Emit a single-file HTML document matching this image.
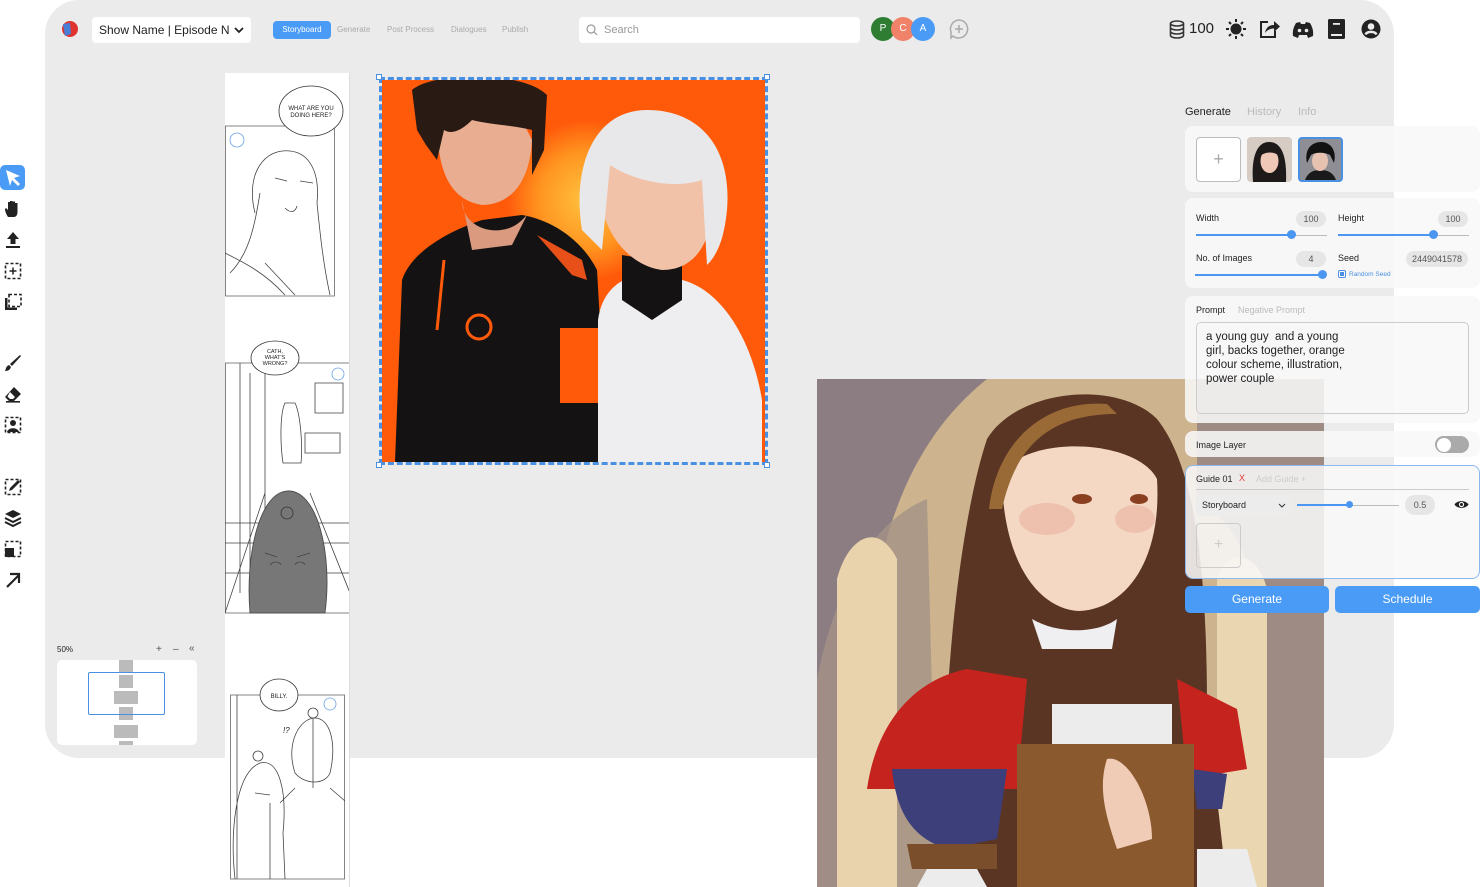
<!DOCTYPE html>
<html><head><meta charset="utf-8">
<style>
*{margin:0;padding:0;box-sizing:border-box}
body{width:1481px;height:887px;overflow:hidden;background:#fff;font-family:"Liberation Sans",sans-serif;position:relative;color:#222}
.abs{position:absolute}
.app{left:45px;top:0;width:1349px;height:758px;background:#ebebeb;border-radius:34px}
.card{position:absolute;left:1185px;width:295px;background:rgba(248,248,248,0.88);border-radius:8px}
.pill{position:absolute;background:#e6e6e6;border-radius:10px;font-size:9px;color:#555;text-align:center;line-height:16px}
.lbl{position:absolute;font-size:9px;color:#222}
.track{position:absolute;height:1px;background:#bbb}
.fill{position:absolute;height:2px;background:#4a96f0}
.knob{position:absolute;width:9px;height:9px;border-radius:50%;background:#4a96f0}
.btn{position:absolute;top:586px;height:27px;background:#4a9bf5;border-radius:5px;color:#fff;font-size:12px;text-align:center;line-height:27px}
.tool{position:absolute;left:3px;width:20px;height:20px}
</style></head><body>
<div class="abs app"></div>

<div class="abs" style="left:60px;top:20px;width:18px;height:18px">
<svg width="18" height="18" viewBox="0 0 18 18"><circle cx="10" cy="9" r="8" fill="#e0332f"/><path d="M3 4 L10 3 L11 14 L5 16 Z" fill="#4a7fd8"/></svg></div>
<div class="abs" style="left:92px;top:17px;width:159px;height:26px;background:#fff;border-radius:4px;font-size:12px;line-height:26px;padding-left:7px;color:#222">Show Name | Episode N <span style="position:absolute;right:7px;top:0">
<svg width="10" height="8" viewBox="0 0 10 8"><path d="M1 2 L5 6 L9 2" stroke="#222" stroke-width="1.8" fill="none"/></svg></span></div>
<div class="abs" style="left:273px;top:21px;width:58px;height:18px;background:#4a9bf5;border-radius:4px;color:#fff;font-size:8px;line-height:18px;text-align:center">Storyboard</div>
<div class="abs" style="left:337px;top:21px;font-size:8px;line-height:18px;color:#aaa">Generate</div>
<div class="abs" style="left:387px;top:21px;font-size:8px;line-height:18px;color:#aaa">Post Process</div>
<div class="abs" style="left:451px;top:21px;font-size:8px;line-height:18px;color:#aaa">Dialogues</div>
<div class="abs" style="left:502px;top:21px;font-size:8px;line-height:18px;color:#aaa">Publish</div>
<div class="abs" style="left:579px;top:17px;width:281px;height:26px;background:#fff;border-radius:4px;font-size:11px;line-height:26px;padding-left:25px;color:#999">Search
<svg class="abs" style="left:7px;top:7px" width="12" height="12" viewBox="0 0 12 12"><circle cx="5" cy="5" r="4" stroke="#999" fill="none" stroke-width="1.2"/><path d="M8 8 L11 11" stroke="#999" stroke-width="1.2"/></svg></div>
<div class="abs" style="left:871px;top:17px;width:24px;height:24px;border-radius:50%;background:#2e7d32;color:#fff;font-size:10px;text-align:center;line-height:24px">P</div>
<div class="abs" style="left:891px;top:17px;width:24px;height:24px;border-radius:50%;background:#f0826a;color:#fff;font-size:10px;text-align:center;line-height:24px">C</div>
<div class="abs" style="left:911px;top:17px;width:24px;height:24px;border-radius:50%;background:#4a9bf5;color:#fff;font-size:10px;text-align:center;line-height:24px">A</div>
<svg class="abs" style="left:948px;top:18px" width="22" height="22" viewBox="0 0 22 22"><path d="M11 2 A9 9 0 1 1 5 18 L3 20 L3 14 A9 9 0 0 1 11 2Z" stroke="#aaa" stroke-width="1.5" fill="none"/><path d="M11 7 V15 M7 11 H15" stroke="#aaa" stroke-width="1.5"/></svg>
<svg class="abs" style="left:1169px;top:20px" width="16" height="19" viewBox="0 0 16 19"><g fill="none" stroke="#333" stroke-width="1.6"><ellipse cx="8" cy="3.5" rx="6.5" ry="2.5"/><path d="M1.5 3.5V15.5c0 1.4 3 2.5 6.5 2.5s6.5-1.1 6.5-2.5V3.5M1.5 7.5c0 1.4 3 2.5 6.5 2.5s6.5-1.1 6.5-2.5M1.5 11.5c0 1.4 3 2.5 6.5 2.5s6.5-1.1 6.5-2.5"/></g></svg>
<div class="abs" style="left:1189px;top:20px;font-size:15px;color:#222">100</div>
<svg class="abs" style="left:1225px;top:18px" width="22" height="22" viewBox="0 0 22 22"><circle cx="11" cy="11" r="5.5" fill="#222"/><g stroke="#222" stroke-width="2"><path d="M11 1v3M11 18v3M1 11h3M18 11h3M4 4l2 2M16 16l2 2M4 18l2-2M16 6l2-2"/></g></svg>
<svg class="abs" style="left:1259px;top:19px" width="22" height="20" viewBox="0 0 22 20"><path d="M9 3H2V18H16V12" stroke="#222" stroke-width="2" fill="none"/><path d="M6 14 C7 8 11 6 15 6 V2 L21 7.5 L15 13 V9.5 C11 9.5 8 11 6 14Z" fill="#222"/></svg>
<svg class="abs" style="left:1292px;top:21px" width="22" height="17" viewBox="0 0 22 17"><path d="M4 2 L8 1 L9 3 H13 L14 1 L18 2 C21 7 21.5 11 21 15 L16 17 L15 14 H7 L6 17 L1 15 C0.5 11 1 7 4 2Z" fill="#222"/><circle cx="7.5" cy="9.5" r="1.8" fill="#ebebeb"/><circle cx="14.5" cy="9.5" r="1.8" fill="#ebebeb"/></svg>
<svg class="abs" style="left:1328px;top:19px" width="17" height="20" viewBox="0 0 17 20"><rect x="0" y="0" width="17" height="20" rx="1.5" fill="#222"/><rect x="3" y="15" width="11" height="2" fill="#ebebeb"/><rect x="5" y="4" width="7" height="1.8" fill="#ebebeb"/></svg>
<svg class="abs" style="left:1361px;top:19px" width="20" height="20" viewBox="0 0 20 20"><circle cx="10" cy="10" r="9.5" fill="#222"/><circle cx="10" cy="7.5" r="3.3" fill="#ebebeb"/><path d="M4.5 15.5 C6 12 14 12 15.5 15.5" stroke="#ebebeb" stroke-width="2.4" fill="none"/></svg>

<div class="abs" style="left:0;top:165px;width:25px;height:25px;background:#4a9bf5;border-radius:5px"></div>
<svg class="tool" style="top:168px" viewBox="0 0 20 20"><path d="M3 2 L17 8 L11 10 L17 16 L15 18 L9 12 L7 18 Z" fill="#fff"/></svg>
<svg class="tool" style="top:199px" viewBox="0 0 20 20"><path d="M5 18 C3 15 2 12 2 10 L3 9 L5 11 V3 H7 V9 V2 H9.5 V9 V2.5 H12 V9 V4 H14.5 V13 C14.5 16 13 18 11 18Z" fill="#222"/></svg>
<svg class="tool" style="top:230px" viewBox="0 0 20 20"><path d="M10 2 L16 9 H12.5 V14 H7.5 V9 H4Z" fill="#222"/><rect x="3" y="16" width="14" height="2" fill="#222"/></svg>
<svg class="tool" style="top:261px" viewBox="0 0 20 20"><rect x="2.5" y="2.5" width="15" height="15" stroke="#222" stroke-width="1.6" stroke-dasharray="3 2" fill="none"/><path d="M10 6.5V13.5M6.5 10H13.5" stroke="#222" stroke-width="1.5"/></svg>
<svg class="tool" style="top:292px" viewBox="0 0 20 20"><rect x="6" y="2.5" width="12" height="12" stroke="#222" stroke-width="1.6" stroke-dasharray="3 2" fill="none"/><path d="M2 6 V18 H14 V15.5 H5 C4.5 15.5 4.5 15 4.5 14.5 V6Z" fill="#222"/></svg>
<svg class="tool" style="top:353px" viewBox="0 0 20 20"><path d="M17 2 L18 3 L9 13 L7 11Z" fill="#222"/><path d="M6 12 L8 14 C7 17 5 18 2 18 C3 16 3 13 6 12Z" fill="#222"/></svg>
<svg class="tool" style="top:384px" viewBox="0 0 20 20"><path d="M11 3 L18 10 L11 17 H6 L2 13Z" fill="#222"/><path d="M7 8 L12 13 L10 15 H7 L4.5 12.5Z" fill="#fff"/><rect x="3" y="17" width="14" height="1.6" fill="#222"/></svg>
<svg class="tool" style="top:415px" viewBox="0 0 20 20"><rect x="2.5" y="2.5" width="15" height="15" stroke="#222" stroke-width="1.6" stroke-dasharray="3 2" fill="none"/><circle cx="10" cy="8" r="3" fill="#222"/><path d="M4 17 C5 12 15 12 16 17Z" fill="#222"/></svg>
<svg class="tool" style="top:477px" viewBox="0 0 20 20"><rect x="2.5" y="2.5" width="15" height="15" stroke="#222" stroke-width="1.6" stroke-dasharray="3 2" fill="none"/><path d="M15 3 L17 5 L9 13 L6 14 L7 11Z" fill="#222"/></svg>
<svg class="tool" style="top:508px" viewBox="0 0 20 20"><path d="M10 2 L18 6 L10 10 L2 6Z" fill="#222"/><path d="M2 10 L10 14 L18 10 M2 14 L10 18 L18 14" stroke="#222" stroke-width="2" fill="none"/></svg>
<svg class="tool" style="top:539px" viewBox="0 0 20 20"><rect x="2.5" y="2.5" width="15" height="15" stroke="#222" stroke-width="1.6" stroke-dasharray="3 2" fill="none"/><rect x="2" y="9" width="9" height="9" fill="#222"/></svg>
<svg class="tool" style="top:570px" viewBox="0 0 20 20"><path d="M4 17 L16 5 M7 4 H16 V13" stroke="#222" stroke-width="2.2" fill="none"/></svg>

<div class="abs" style="left:57px;top:645px;font-size:8px;color:#222">50%</div>
<div class="abs" style="left:156px;top:644px;font-size:10px;color:#555">+</div>
<div class="abs" style="left:173px;top:644px;font-size:10px;color:#555">–</div>
<div class="abs" style="left:189px;top:643px;font-size:10px;color:#555">«</div>
<div class="abs" style="left:57px;top:660px;width:140px;height:85px;background:#fff;border-radius:5px;overflow:hidden">
<div class="abs" style="left:62px;top:0;width:14px;height:12px;background:#bbb"></div>
<div class="abs" style="left:62px;top:15px;width:14px;height:13px;background:#bbb"></div>
<div class="abs" style="left:57px;top:31px;width:24px;height:13px;background:#bbb"></div>
<div class="abs" style="left:62px;top:47px;width:14px;height:13px;background:#bbb"></div>
<div class="abs" style="left:57px;top:65px;width:24px;height:13px;background:#bbb"></div>
<div class="abs" style="left:62px;top:81px;width:14px;height:6px;background:#bbb"></div>
<div class="abs" style="left:31px;top:12px;width:77px;height:43px;border:1.5px solid #4a90e2;border-radius:2px"></div>
</div>

<div class="abs" style="left:225px;top:73px;width:125px;height:814px;background:#fff;border-right:1px solid #ddd;overflow:hidden">
<svg width="125" height="814" viewBox="0 0 125 814" fill="none" stroke="#444" stroke-width="0.8">
<rect x="0.5" y="53" width="109" height="170" stroke="#666"/>
<ellipse cx="86" cy="38" rx="32" ry="25" fill="#fff" stroke="#333"/>
<text x="86" y="37" font-size="6" text-anchor="middle" fill="#222" stroke="none" font-family="Liberation Sans">WHAT ARE YOU</text>
<text x="86" y="44" font-size="6" text-anchor="middle" fill="#222" stroke="none" font-family="Liberation Sans">DOING HERE?</text>
<circle cx="12" cy="67" r="7" stroke="#6aa0e0"/>
<path d="M30 140 C20 100 40 75 65 78 C85 80 95 100 92 130 M35 120 C30 150 25 180 5 200 M92 130 C95 160 98 190 105 222 M50 105 L62 108 M75 108 L88 110 M60 135 C65 140 70 140 72 133 M0 180 C20 190 40 200 60 222 M40 190 L70 222"/>
<rect x="0.5" y="290" width="124" height="250" stroke="#666"/>
<ellipse cx="50" cy="285" rx="24" ry="17" fill="#fff" stroke="#333"/>
<text x="50" y="280" font-size="5.5" text-anchor="middle" fill="#222" stroke="none" font-family="Liberation Sans">CATH,</text>
<text x="50" y="286" font-size="5.5" text-anchor="middle" fill="#222" stroke="none" font-family="Liberation Sans">WHAT'S</text>
<text x="50" y="292" font-size="5.5" text-anchor="middle" fill="#222" stroke="none" font-family="Liberation Sans">WRONG?</text>
<circle cx="113" cy="301" r="6" stroke="#6aa0e0"/>
<path d="M15 290 V520 M25 300 V510 M40 300 V440 M60 330 C55 340 55 370 58 390 L76 390 C78 370 75 340 70 330Z M90 310 H118 V340 H90Z M80 360 H115 V380 H80Z M0 450 H125 M0 470 H125 M0 500 H125 M40 420 L0 540 M85 420 L125 520"/>
<path d="M25 540 C20 480 35 420 62 418 C92 416 108 480 100 540Z" fill="#777" stroke="#444"/>
<circle cx="62" cy="440" r="6" stroke="#333"/>
<path d="M40 480 L52 484 M72 484 L85 480 M45 492 C48 488 54 488 56 492 M70 492 C72 488 78 488 80 492"/>
<rect x="5.5" y="622" width="114" height="184" stroke="#666"/>
<ellipse cx="54" cy="622" rx="19" ry="16" fill="#fff" stroke="#333"/>
<text x="54" y="625" font-size="6" text-anchor="middle" fill="#222" stroke="none" font-family="Liberation Sans">BILLY.</text>
<circle cx="105" cy="631" r="6" stroke="#6aa0e0"/>
<path d="M12 622 V806 M70 700 C60 670 75 645 90 645 C105 645 112 670 105 700 C100 712 80 712 70 700Z M88 645 V715 M70 715 L55 730 M105 715 L120 728 M45 730 V806 M10 806 C5 760 10 700 35 690 C55 685 62 720 58 760 L60 806 M30 720 L45 722"/>
<circle cx="33" cy="683" r="5"/><circle cx="88" cy="640" r="5"/>
<text x="58" y="660" font-size="8" fill="#222" stroke="none" font-family="Liberation Sans" font-style="italic">!?</text>
</svg>
</div>

<div class="abs" style="left:382px;top:80px;width:383px;height:382px;background:#ff5a0a;overflow:hidden">
<svg width="383" height="382" viewBox="0 0 383 382">
<defs><radialGradient id="sun" cx="0.5" cy="0.5" r="0.5"><stop offset="0" stop-color="#ffc240"/><stop offset="0.6" stop-color="#ff9520"/><stop offset="1" stop-color="#ff5a0a"/></radialGradient></defs>
<circle cx="205" cy="120" r="80" fill="url(#sun)"/>
<path d="M13 382 L20 200 C30 170 70 150 100 140 L140 135 C170 140 200 160 215 190 L226 382Z" fill="#141212"/>
<path d="M155 155 L200 180 L205 200 L190 195Z" fill="#e8501a"/>
<rect x="178" y="248" width="38" height="75" fill="#ff5a0a"/>
<circle cx="97" cy="247" r="12" stroke="#ff5a0a" stroke-width="3" fill="none"/>
<path d="M62 180 L55 250" stroke="#ff5a0a" stroke-width="3"/>
<path d="M80 120 C80 150 120 160 140 140 L145 135 L130 165 L90 170Z" fill="#d99a80"/>
<path d="M55 40 C55 95 70 120 100 125 C130 125 148 100 150 60 L140 40Z" fill="#e9ad92"/>
<path d="M30 10 C50 -8 140 -10 165 15 L162 70 L150 95 L150 50 C130 45 110 45 90 40 C80 50 70 55 62 50 L55 80 L44 65 L35 50Z" fill="#2a1a14"/>
<path d="M216 382 V240 C220 210 240 195 265 195 L300 200 C340 210 370 260 380 320 V382Z" fill="#eeeef0"/>
<path d="M240 175 L300 185 L300 220 L270 240 L240 220Z" fill="#141212"/>
<path d="M215 90 C215 150 245 185 280 190 C320 190 335 150 330 100 L320 80 L225 70Z" fill="#f2c2a8"/>
<path d="M200 150 C190 90 210 30 265 30 C320 30 350 70 345 130 C342 160 335 175 325 185 L320 100 C290 110 250 100 228 85 L220 170Z" fill="#e8e8ea"/>
</svg></div>
<div class="abs" style="left:379px;top:77px;width:389px;height:388px;border:3px dashed #4a90e2;"></div>
<div class="abs" style="left:376px;top:74px;width:6px;height:6px;border:1px solid #4a90e2;background:#fff"></div>
<div class="abs" style="left:764px;top:74px;width:6px;height:6px;border:1px solid #4a90e2;background:#fff"></div>
<div class="abs" style="left:376px;top:462px;width:6px;height:6px;border:1px solid #4a90e2;background:#fff"></div>
<div class="abs" style="left:764px;top:462px;width:6px;height:6px;border:1px solid #4a90e2;background:#fff"></div>

<div class="abs" style="left:817px;top:379px;width:507px;height:508px;background:#c9b08c;overflow:hidden">
<svg width="507" height="508" viewBox="0 0 507 508">
<rect width="507" height="508" fill="#cdb48e"/>
<path d="M0 0 H170 C120 40 80 100 60 200 L60 508 H0Z" fill="#8c7d82"/>
<path d="M0 300 C20 200 60 140 110 120 L120 508 H0Z" fill="#a59287" opacity="0.8"/>
<path d="M20 508 V200 C30 160 60 140 80 180 V508Z" fill="#e8d3ad"/>
<path d="M380 0 H507 V508 H440 V220 C430 160 400 130 380 120Z" fill="#9d8b84"/>
<path d="M400 508 V200 C410 170 440 170 450 210 V508Z" fill="#ead6b0"/>
<path d="M130 508 C120 350 140 150 170 60 C200 10 300 0 340 40 C380 90 390 200 390 330 L410 508Z" fill="#5a3524"/>
<path d="M185 95 C185 180 220 230 262 232 C310 230 345 180 340 100 C320 60 210 55 185 95Z" fill="#f4d8c4"/>
<path d="M175 110 C190 50 250 25 300 30 C340 40 350 70 350 110 L330 70 C300 40 230 40 200 70Z" fill="#5a3524"/>
<path d="M172 130 C180 60 230 20 290 25 L300 35 C240 35 200 60 185 130Z" fill="#9a6a36"/>
<ellipse cx="230" cy="140" rx="28" ry="16" fill="#eab0a0" opacity="0.6"/>
<ellipse cx="318" cy="140" rx="20" ry="14" fill="#eab0a0" opacity="0.6"/>
<ellipse cx="265" cy="120" rx="10" ry="5" fill="#8a4020"/><ellipse cx="322" cy="120" rx="9" ry="5" fill="#8a4020"/>
<path d="M215 240 C240 255 280 255 300 240 L295 270 L225 270Z" fill="#efeef0"/>
<path d="M50 410 C60 340 100 300 150 290 L210 300 L200 410Z" fill="#c5231d"/>
<path d="M360 300 L420 330 L430 390 L370 400Z" fill="#c5231d"/>
<path d="M75 390 C80 440 100 460 130 470 L180 460 L190 390Z" fill="#3d3f7a"/>
<path d="M375 390 L410 395 L405 430 L380 430Z" fill="#3d3f7a"/>
<path d="M235 325 H355 V365 H235Z" fill="#ececec"/>
<path d="M200 365 H377 V508 H200Z" fill="#8a5a2e"/>
<path d="M290 380 C310 375 335 420 335 460 L300 470 C290 440 280 410 290 380Z" fill="#f0cbb6"/>
<path d="M90 465 H180 V490 H95Z" fill="#7a4e2a"/>
<path d="M110 490 L160 490 L170 508 H100Z" fill="#ececec"/>
<path d="M380 470 L430 470 L440 508 H380Z" fill="#ececec"/>
</svg></div>

<div class="abs" style="left:1185px;top:106px;font-size:11px;color:#222">Generate</div>
<div class="abs" style="left:1247px;top:106px;font-size:11px;color:#bbb">History</div>
<div class="abs" style="left:1298px;top:106px;font-size:11px;color:#bbb">Info</div>

<div class="card" style="top:126px;height:66px"></div>
<div class="abs" style="left:1196px;top:137px;width:45px;height:45px;border:1.5px solid #bbb;border-radius:4px;background:#fff;color:#aaa;font-size:18px;text-align:center;line-height:42px">+</div>
<div class="abs" style="left:1247px;top:137px;width:45px;height:45px;border-radius:4px;background:#d7ccc4;overflow:hidden">
<svg width="45" height="45" viewBox="0 0 45 45"><path d="M6 45 C4 20 10 5 22 5 C35 5 40 20 39 45Z" fill="#1e1a1a"/><ellipse cx="22.5" cy="24" rx="9" ry="12" fill="#f0c8b8"/><path d="M12 20 C14 8 32 8 33 20 C28 14 18 14 12 20Z" fill="#1e1a1a"/></svg></div>
<div class="abs" style="left:1298px;top:137px;width:45px;height:45px;border-radius:4px;background:#8e8e94;border:2px solid #4a90e2;overflow:hidden">
<svg width="41" height="41" viewBox="0 0 41 41"><path d="M5 41 C8 33 14 31 20 31 C27 31 33 33 36 41Z" fill="#1a1a1a"/><ellipse cx="20" cy="22" rx="8" ry="10" fill="#e8c2b0"/><path d="M7 24 C4 10 12 3 21 3 C31 3 37 12 34 24 L30 16 C25 13 15 13 11 16Z" fill="#121212"/></svg></div>

<div class="card" style="top:198px;height:90px"></div>
<div class="lbl" style="left:1196px;top:213px">Width</div>
<div class="pill" style="left:1296px;top:211px;width:30px">100</div>
<div class="lbl" style="left:1338px;top:213px">Height</div>
<div class="pill" style="left:1438px;top:211px;width:30px">100</div>
<div class="track" style="left:1196px;top:235px;width:131px"></div>
<div class="fill" style="left:1196px;top:234px;width:95px"></div>
<div class="knob" style="left:1287px;top:230px"></div>
<div class="track" style="left:1338px;top:235px;width:131px"></div>
<div class="fill" style="left:1338px;top:234px;width:95px"></div>
<div class="knob" style="left:1429px;top:230px"></div>
<div class="lbl" style="left:1196px;top:253px">No. of Images</div>
<div class="pill" style="left:1296px;top:251px;width:30px">4</div>
<div class="lbl" style="left:1338px;top:253px">Seed</div>
<div class="pill" style="left:1406px;top:251px;width:62px">2449041578</div>
<div class="fill" style="left:1195px;top:274px;width:128px"></div>
<div class="knob" style="left:1318px;top:270px"></div>
<div class="abs" style="left:1338px;top:270px;width:8px;height:8px;border:1px solid #4a90e2;border-radius:2px;background:#fff"><div style="margin:1px;width:4px;height:4px;background:#4a90e2"></div></div>
<div class="abs" style="left:1349px;top:271px;font-size:6.5px;color:#4a90e2">Random Seed</div>

<div class="card" style="top:296px;height:127px"></div>
<div class="lbl" style="left:1196px;top:305px">Prompt</div>
<div class="lbl" style="left:1238px;top:305px;color:#bbb">Negative Prompt</div>
<div class="abs" style="left:1196px;top:322px;width:273px;height:92px;border:1px solid #ccc;border-radius:5px;padding:7px 9px;font-size:11.5px;line-height:14px;color:#222;white-space:nowrap">a young guy&nbsp; and a young<br>girl, backs together, orange<br>colour scheme, illustration,<br>power couple</div>

<div class="card" style="top:431px;height:26px"></div>
<div class="lbl" style="left:1196px;top:440px">Image Layer</div>
<div class="abs" style="left:1435px;top:436px;width:34px;height:17px;border-radius:9px;background:#aaa"><div style="margin:1.5px;width:14px;height:14px;border-radius:50%;background:#fff"></div></div>

<div class="card" style="top:465px;height:114px;border:1.5px solid #8ab8ef"></div>
<div class="lbl" style="left:1196px;top:474px">Guide 01</div>
<div class="lbl" style="left:1239px;top:473px;color:#e53935">X</div>
<div class="lbl" style="left:1256px;top:474px;color:#ccc">Add Guide +</div>
<div class="track" style="left:1196px;top:489px;width:273px;background:#ccc"></div>
<div class="abs" style="left:1196px;top:495px;width:96px;height:21px;background:#ececec;border-radius:5px;font-size:9px;line-height:21px;padding-left:6px">Storyboard<svg class="abs" style="right:6px;top:8px" width="8" height="6" viewBox="0 0 8 6"><path d="M1 1 L4 4 L7 1" stroke="#333" fill="none"/></svg></div>
<div class="track" style="left:1297px;top:505px;width:102px"></div>
<div class="fill" style="left:1297px;top:504px;width:52px;height:1.5px"></div>
<div class="knob" style="left:1346px;top:501px;width:7px;height:7px"></div>
<div class="pill" style="left:1405px;top:495px;width:30px;height:20px;line-height:20px">0.5</div>
<svg class="abs" style="left:1454px;top:499px" width="15" height="11" viewBox="0 0 15 11"><path d="M0.5 5.5 C3 1 12 1 14.5 5.5 C12 10 3 10 0.5 5.5Z" fill="#222"/><circle cx="7.5" cy="5.5" r="2.6" fill="#fff"/><circle cx="7.5" cy="5.5" r="1.5" fill="#222"/></svg>
<div class="abs" style="left:1196px;top:523px;width:45px;height:45px;border:1.5px solid #ccc;border-radius:4px;color:#ccc;font-size:16px;text-align:center;line-height:42px">+</div>

<div class="btn" style="left:1185px;width:144px">Generate</div>
<div class="btn" style="left:1335px;width:145px">Schedule</div>
</body></html>
